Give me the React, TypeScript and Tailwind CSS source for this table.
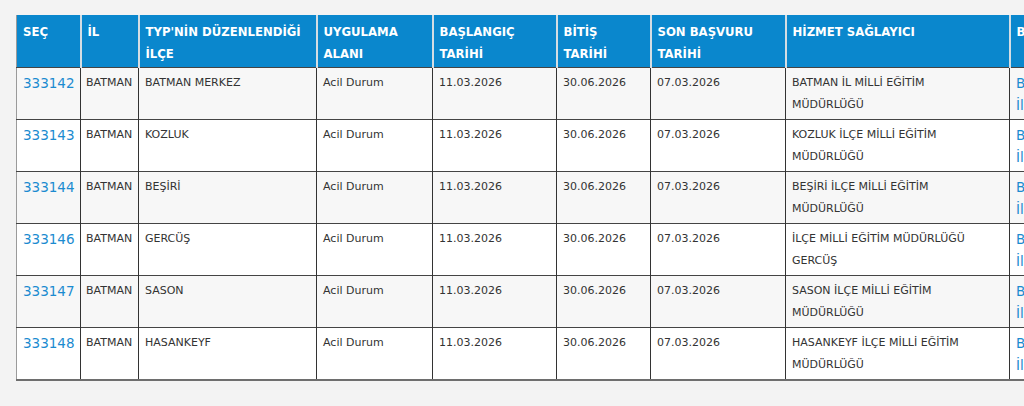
import React from "react";

const rows = [
  ["333142", "BATMAN", "BATMAN MERKEZ", "BATMAN İL MİLLİ EĞİTİM MÜDÜRLÜĞÜ"],
  ["333143", "BATMAN", "KOZLUK", "KOZLUK İLÇE MİLLİ EĞİTİM MÜDÜRLÜĞÜ"],
  ["333144", "BATMAN", "BEŞİRİ", "BEŞİRİ İLÇE MİLLİ EĞİTİM MÜDÜRLÜĞÜ"],
  ["333146", "BATMAN", "GERCÜŞ", "İLÇE MİLLİ EĞİTİM MÜDÜRLÜĞÜ GERCÜŞ"],
  ["333147", "BATMAN", "SASON", "SASON İLÇE MİLLİ EĞİTİM MÜDÜRLÜĞÜ"],
  ["333148", "BATMAN", "HASANKEYF", "HASANKEYF İLÇE MİLLİ EĞİTİM MÜDÜRLÜĞÜ"],
];

const headers = [
  "SEÇ",
  "İL",
  "TYP'NİN DÜZENLENDİĞİ İLÇE",
  "UYGULAMA ALANI",
  "BAŞLANGIÇ TARİHİ",
  "BİTİŞ TARİHİ",
  "SON BAŞVURU TARİHİ",
  "HİZMET SAĞLAYICI",
  "BAŞVURU İÇİN",
];

const widths = [64, 58, 178, 116, 124, 94, 135, 224, 160];

export default function App() {
  return (
    <div
      className="w-[1024px] h-[406px] overflow-hidden bg-[#f3f3f3] pt-[15px] pl-[16px]"
      style={{ fontFamily: "'DejaVu Sans', Verdana, sans-serif" }}
    >
      <table className="table-fixed border-collapse w-[1153px] border-l border-l-[#9a9a9a] border-b-2 border-b-[#6e6e6e]">
        <colgroup>
          {widths.map((w, i) => (
            <col key={i} style={{ width: w }} />
          ))}
        </colgroup>
        <thead>
          <tr className="bg-[#0a87cd] h-[52px]">
            {headers.map((h, i) => (
              <th
                key={i}
                className="text-left align-top text-white font-bold text-[11.7px] leading-[22px] pl-[6px] pr-[5px] pt-[6px] pb-[2px] border-r-2 border-r-[#d4dde3]"
              >
                {h}
              </th>
            ))}
          </tr>
        </thead>
        <tbody>
          {rows.map((r, i) => (
            <tr
              key={r[0]}
              className={
                (i % 2 === 0 ? "bg-[#f7f7f7]" : "bg-white") +
                " h-[52px] border-t border-t-[#444]"
              }
            >
              <td className="align-top px-[6px] pt-[4px] text-[13.5px] leading-[22px] text-[#1b8bd0] border-r border-r-[#333]">
                {r[0]}
              </td>
              <td className="align-top px-[5px] pt-[4px] text-[11px] leading-[22px] text-[#333] border-r border-r-[#333]">
                {r[1]}
              </td>
              <td className="align-top px-[6px] pt-[4px] text-[11px] leading-[22px] text-[#333] border-r border-r-[#333]">
                {r[2]}
              </td>
              <td className="align-top px-[6px] pt-[4px] text-[11px] leading-[22px] text-[#333] border-r border-r-[#333]">
                Acil Durum
              </td>
              <td className="align-top px-[6px] pt-[4px] text-[11px] leading-[22px] text-[#333] border-r border-r-[#333]">
                11.03.2026
              </td>
              <td className="align-top px-[6px] pt-[4px] text-[11px] leading-[22px] text-[#333] border-r border-r-[#333]">
                30.06.2026
              </td>
              <td className="align-top px-[6px] pt-[4px] text-[11px] leading-[22px] text-[#333] border-r border-r-[#333]">
                07.03.2026
              </td>
              <td className="align-top pl-[6px] pt-[4px] pr-[40px] text-[11px] leading-[22px] text-[#333] border-r border-r-[#333]">
                {r[3]}
              </td>
              <td className="align-top px-[6px] pt-[4px] text-[13.5px] leading-[22px] text-[#1b8bd0]">
                Başvuru
                <br />
                İlan Detayı
              </td>
            </tr>
          ))}
        </tbody>
      </table>
    </div>
  );
}
